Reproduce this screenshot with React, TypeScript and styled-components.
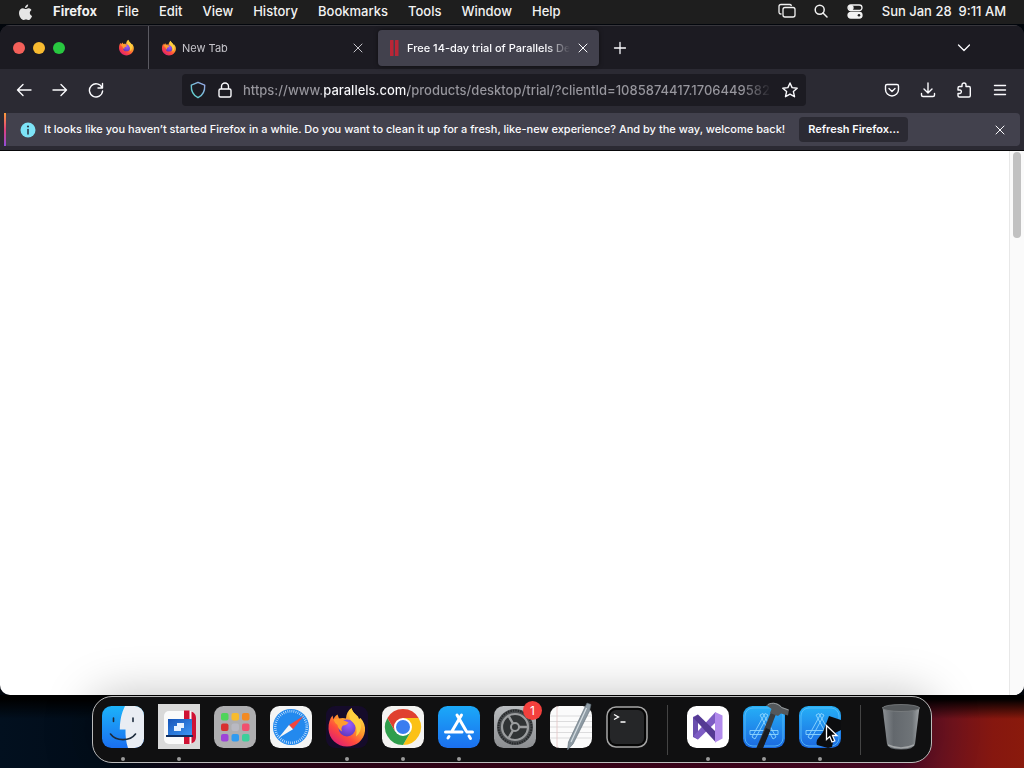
import React from "react";
import styled, { createGlobalStyle, css } from "styled-components";

const GlobalStyle = createGlobalStyle`
  * { box-sizing: border-box; }
  body {
    margin: 0;
    background: #02060c;
    font-family: Inter, "Liberation Sans", sans-serif;
    -webkit-font-smoothing: antialiased;
  }
  button {
    font: inherit;
    color: inherit;
    background: none;
    border: 0;
    padding: 0;
    cursor: default;
  }
`;

const Desktop = styled.div`
  min-height: 100vh;
  display: flex;
  flex-direction: column;
  overflow: hidden;
  background:
    linear-gradient(#000 0, #000 4px, transparent 24px) bottom / 100% 73px no-repeat,
    linear-gradient(90deg, #02101f 0%, #020c18 12%, #14081a 18%, #2d0418 30%, #3a0318 50%, #45041f 75%, #4d0a28 88%, #6b1220 92%, #86170f 97%, #8a1a0c 100%) bottom / 100% 73px no-repeat,
    #02060c;
`;

/* Menu bar */

const MenuBar = styled.header`
  height: 24px;
  display: flex;
  align-items: center;
  justify-content: space-between;
  padding: 0 18px 2px;
  background: #1e1e1e;
  color: #f2f2f2;
  font-size: 13px;
  line-height: 22px;
  white-space: nowrap;
`;

const MenuList = styled.nav`
  display: flex;
  align-items: center;
  gap: 20px;
`;

const MenuItem = styled.button<{ $app?: boolean }>`
  font-weight: ${(p) => (p.$app ? 700 : 500)};
`;

const StatusArea = styled.div`
  display: flex;
  align-items: center;
  gap: 16px;
  font-weight: 500;
`;

const Clock = styled.time`
  padding-left: 2px;
`;

const IconButton = styled.button<{ $size?: number }>`
  width: ${(p) => p.$size ?? 18}px;
  height: ${(p) => p.$size ?? 18}px;
  flex: none;
  display: grid;
  place-items: center;
`;

/* Browser window */

const BrowserWindow = styled.main`
  flex: 1;
  display: flex;
  flex-direction: column;
  margin-top: 1px;
  border-radius: 10px;
  overflow: hidden;
  background: #2b2a33;
  color: #fbfbfe;
`;

const TabStrip = styled.div`
  height: 44px;
  display: flex;
  align-items: center;
  background: #1c1b22;
  border-top: 1px solid #37363c;
  font-size: 11px;
`;

const TrafficLights = styled.div`
  display: flex;
  gap: 8px;
  padding-left: 13px;
  width: 104px;
`;

const Light = styled.button<{ $color: string }>`
  width: 12px;
  height: 12px;
  border-radius: 50%;
  background: ${(p) => p.$color};
`;

const PinnedTab = styled.button`
  width: 45px;
  height: 100%;
  display: grid;
  place-items: center;
  border-right: 1px solid #5b5a62;
`;

const TabList = styled.div`
  display: flex;
  gap: 4px;
  padding: 0 11px 0 4px;
`;

const Tab = styled.div<{ $active?: boolean }>`
  width: 221px;
  height: 36px;
  display: flex;
  align-items: center;
  gap: 5px;
  padding: 0 8px;
  border-radius: 4px;
  color: #c6c5cb;
  ${(p) =>
    p.$active &&
    css`
      color: #fbfbfe;
      background: #42414d;
      box-shadow: 0 0 4px rgba(0, 0, 0, 0.5);
    `}
`;

const TabLabel = styled.button<{ $active?: boolean }>`
  flex: 1;
  min-width: 0;
  overflow: hidden;
  white-space: nowrap;
  text-align: left;
  line-height: 16px;
  font-weight: ${(p) => (p.$active ? 500 : 400)};
  mask-image: linear-gradient(90deg, #000 calc(100% - 24px), transparent);
`;

const StripEnd = styled.div`
  margin-left: auto;
  padding-right: 51px;
`;

const NavBar = styled.div`
  height: 41px;
  display: flex;
  align-items: center;
  padding: 0 15px;
`;

const NavGroup = styled.div`
  display: flex;
  gap: 18px;
`;

const AddressBar = styled.div`
  flex: 1;
  max-width: 624px;
  height: 32px;
  display: flex;
  align-items: center;
  gap: 9px;
  margin-left: 77px;
  margin-right: auto;
  padding: 0 7px;
  border-radius: 4px;
  background: #1c1b22;
`;

const AddressInput = styled.input`
  flex: 1;
  min-width: 0;
  padding: 0;
  border: 0;
  outline: 0;
  font: 500 13px/20px Inter, "Liberation Sans", sans-serif;
  color: transparent;
  background: linear-gradient(90deg, #98979e 80px, #fbfbfe 80px, #fbfbfe 165px, #98979e 165px, #98979e calc(100% - 30px), transparent);
  background-clip: text;
  -webkit-background-clip: text;
`;

const Notice = styled.div`
  display: flex;
  align-items: center;
  height: 33px;
  margin: 3px 4px 4px;
  padding-right: 11px;
  border-radius: 4px;
  border-left: 2px solid;
  border-image: linear-gradient(#ffa436, #e0407b 50%, #8a4de0) 1;
  background: #42414d;
  font-size: 11px;
  font-weight: 500;
  white-space: nowrap;
`;

const NoticeText = styled.p`
  margin: 0 14px 0 8px;
  padding-bottom: 2px;
`;

const NoticeIcon = styled.span`
  display: grid;
  margin-left: 14px;
`;

const RefreshButton = styled.button`
  height: 25px;
  padding: 0 9px 2px;
  border-radius: 4px;
  background: #2b2a33;
  font-weight: 600;
`;

const Spacer = styled.div`
  flex: 1;
`;

const Page = styled.section`
  flex: 1;
  display: flex;
  justify-content: flex-end;
  border-top: 1px solid #08080a;
  background: #fff;
`;

const ScrollTrack = styled.div`
  width: 15px;
  padding: 1px 3px;
  background: #fafafa;
  border-left: 1px solid #e8e8e8;
`;

const ScrollThumb = styled.div`
  width: 8px;
  height: 86px;
  border-radius: 4px;
  background: #c1c1c1;
`;

/* Dock */

const DockArea = styled.footer`
  display: flex;
  justify-content: center;
  padding: 1px 0 5px;
`;

const Dock = styled.div`
  position: relative;
  height: 67px;
  display: flex;
  padding: 0 2px;
  border: 1px solid #bcbcbc;
  border-radius: 20px;
  background: #101011;
  box-shadow: 0 0 48px rgba(0, 0, 0, 0.26);
`;

const DockItem = styled.button<{ $running?: boolean }>`
  position: relative;
  width: 56px;
  display: flex;
  flex-direction: column;
  align-items: center;
  padding-top: 6px;

  &::after {
    content: "";
    width: 4px;
    height: 4px;
    margin-top: 6px;
    border-radius: 50%;
    background: ${(p) => (p.$running ? "#9a9a9a" : "transparent")};
  }
`;

const DockDivider = styled.div`
  width: 1px;
  height: 50px;
  margin: 8px 12px 0;
  background: #444;
`;

const Badge = styled.span`
  position: absolute;
  top: 4px;
  right: 1px;
  width: 19px;
  height: 19px;
  border-radius: 50%;
  background: #f3403d;
  color: #fff;
  font-size: 12px;
  line-height: 19px;
  text-align: center;
`;

const Pointer = styled.svg`
  position: absolute;
  left: 33px;
  top: 27px;
`;

/* Drawings */

const stroke = {
  fill: "none",
  stroke: "currentColor",
  strokeWidth: 1.4,
  strokeLinecap: "round" as const,
  strokeLinejoin: "round" as const,
};

const Line = ({ d, size = 16, width = 1.4 }: { d: string; size?: number; width?: number }) => (
  <svg width={size} height={size} viewBox="0 0 16 16" {...stroke} strokeWidth={width}>
    <path d={d} />
  </svg>
);

const AppleLogo = () => (
  <svg width="15" height="17" viewBox="0 0 15 17" fill="#e6e6e6">
    <path d="M10.2 0.4c.1 1.9-1.5 3.6-3.2 3.5C6.8 2.2 8.5.5 10.2.4ZM10.3 4.3c.7 0 2.2.3 3.2 1.7-2.5 1.5-2.100 4.900.6 5.900-.5 1.500-2 4.100-3.500 4.100-1 0-1.400-.6-2.600-.6s-1.700.6-2.600.6C3.600 16 1 12.700 1 9.100c0-3.200 2-4.800 3.900-4.800 1.200 0 2.200.8 2.900.8s1.500-.8 2.500-.8Z" />
  </svg>
);

const FirefoxMark = ({ size, id }: { size: number; id: string }) => (
  <svg width={size} height={size} viewBox="0 0 42 42">
    <defs>
      <linearGradient id={id + "a"} x1="0.85" y1="0.1" x2="0.25" y2="0.95">
        <stop offset="0" stopColor="#ffe14a" />
        <stop offset="0.4" stopColor="#ff9a2b" />
        <stop offset="0.7" stopColor="#ff4a3d" />
        <stop offset="1" stopColor="#e0226f" />
      </linearGradient>
      <radialGradient id={id + "b"} cx="0.6" cy="0.3" r="0.8">
        <stop offset="0" stopColor="#9a5cff" />
        <stop offset="1" stopColor="#5a35b5" />
      </radialGradient>
    </defs>
    <path
      fill={`url(#${id}a)`}
      d="M2.5 23C2.3 17 4 12.5 6.5 9.5L7.5 13.5C8 11.5 9.5 9.8 11.5 8.5L13 12.5C15.5 11.8 18 11.8 20 12.5C20.3 8 22 4.5 25.5 2C26.5 6 29 7.8 32 10.5L33 13L34.5 12C38 16 39.5 20 39 25C38 34 30.5 40.5 21 40.5C11 40.5 3 33 2.5 23Z"
    />
    <circle cx="21" cy="22" r="8.5" fill={`url(#${id}b)`} />
    <path fill="#ff9d2e" d="M7.5 13.5Q13 11 18 14.5L22.5 16.5Q20.5 19.5 17 19.5Q14.5 22 16 25.5Q12 23 11.5 19Q8.5 17 7.5 13.5Z" />
    <path fill="#ffcf3f" d="M25.5 2C26 7 34 11 35 19Q35.5 26 30 30.5Q32 22 27.5 17Q20 12 25.5 2Z" />
  </svg>
);

const Shield = () => (
  <svg width="18" height="18" viewBox="0 0 18 18" fill="none" strokeWidth="1.4" strokeLinejoin="round">
    <defs>
      <linearGradient id="shield" x1="0" y1="1" x2="1" y2="0">
        <stop offset="0" stopColor="#54d3c5" />
        <stop offset="1" stopColor="#9aa5e8" />
      </linearGradient>
    </defs>
    <path stroke="url(#shield)" d="M9 1.3L15.7 4.2C16 9.8 13.5 14.5 9 16.7C4.5 14.5 2 9.8 2.3 4.2Z" />
  </svg>
);

const Parallels = () => (
  <svg width="16" height="16" viewBox="0 0 16 16" fill="#b92636">
    <rect x="4" y="0" width="3.5" height="16" rx="0.5" />
    <rect x="9" y="0" width="3.5" height="16" rx="0.5" />
  </svg>
);

const CLOSE = "M4 4L12 12M12 4L4 12";

const Art = ({ children, overflow }: { children: React.ReactNode; overflow?: boolean }) => (
  <svg width="50" height="48" viewBox="-4 -3 50 48" overflow={overflow ? "visible" : undefined}>
    {children}
  </svg>
);

const Finder = () => (
  <Art>
    <defs>
      <linearGradient id="fin" x1="0" y1="0" x2="0" y2="1">
        <stop offset="0" stopColor="#1cb3fa" />
        <stop offset="1" stopColor="#1a6ff0" />
      </linearGradient>
      <clipPath id="finc"><rect width="42" height="42" rx="9.5" /></clipPath>
    </defs>
    <g clipPath="url(#finc)">
      <rect width="42" height="42" fill="url(#fin)" />
      <path fill="#e9edf3" d="M23 0C19.5 7 18 14 17.8 23.5H23.5C23.3 30 24 36 26 42H42V0Z" />
    </g>
    <g fill="none" stroke="#1d2b3c" strokeWidth="1.6" strokeLinecap="round">
      <path d="M11.5 12V15.5M31 12V15.5" />
      <path d="M8.5 28C14 35.5 28 35.5 33.5 28" />
    </g>
  </Art>
);

const ParallelsApp = () => (
  <Art>
    <defs>
      <linearGradient id="lap" x1="0" y1="0" x2="1" y2="1">
        <stop offset="0" stopColor="#1554b8" />
        <stop offset="1" stopColor="#3d97f5" />
      </linearGradient>
    </defs>
    <rect x="0" y="-2" width="42" height="45" fill="#d9d9d9" />
    <rect x="6" y="5" width="31" height="33" rx="5" fill="#fafafa" />
    <path fill="#cf1234" d="M26 4.500H31.500V38H26ZM33.500 5.500Q38 7 38 12V31Q38 36 33.500 37.500Z" />
    <path fill="url(#lap)" d="M10 13H34V29H10Z" />
    <path fill="#0f2f63" d="M8 29H35V31H8Z" />
    <path fill="#e4f1ff" d="M19 17H26V22H23V25H16V20H19Z" />
  </Art>
);

const Launchpad = () => (
  <Art>
    <rect width="42" height="42" rx="9.5" fill="#aeaeb0" />
    {["#4fd45a", "#f7bb2d", "#f28a22", "#d8302f", "#b9b9c2", "#f0506e", "#9d44d8", "#2f9bf0", "#3ccf9b"].map((c, i) => (
      <rect key={c} x={7 + (i % 3) * 10.5} y={7 + Math.floor(i / 3) * 10.5} width="7.5" height="7.5" rx="2" fill={c} />
    ))}
  </Art>
);

const Safari = () => (
  <Art>
    <rect width="42" height="42" rx="9.5" fill="#f4f4f4" />
    <circle cx="21" cy="21" r="18" fill="#2389ee" />
    <circle cx="21" cy="21" r="15.8" fill="none" stroke="#d5eaff" strokeWidth="2.6" strokeDasharray="0.7 1.37" />
    <path fill="#f2453d" d="M33.5 10L23 23.2L19 19Z" />
    <path fill="#f6f6f6" d="M8.5 32L19 19L23 23.2Z" />
  </Art>
);

const Chrome = () => (
  <Art>
    <rect width="42" height="42" rx="9.5" fill="#f4f3f1" />
    <path fill="#fbc116" d="M21 12H36.600A18 18 0 0 1 21 39L28.800 25.500Z" />
    <path fill="#2f9e4c" d="M28.800 25.500L21 39A18 18 0 0 1 5.400 12L13.200 25.500Z" />
    <path fill="#e0402f" d="M13.200 25.500L5.400 12A18 18 0 0 1 36.600 12H21Z" />
    <circle cx="21" cy="21" r="9" fill="#fff" />
    <circle cx="21" cy="21" r="7" fill="#3a7df0" />
  </Art>
);

const AppStore = () => (
  <Art>
    <defs>
      <linearGradient id="store" x1="0" y1="0" x2="0" y2="1">
        <stop offset="0" stopColor="#1ba9f8" />
        <stop offset="1" stopColor="#1b6fee" />
      </linearGradient>
    </defs>
    <rect width="42" height="42" rx="9.5" fill="url(#store)" />
    <g stroke="#fff" strokeWidth="3" strokeLinecap="round">
      <path d="M19 9L28.5 25.5M31 30L32.5 32.5M23.5 9L13.5 26M7.5 26H24M29 26H34.5M11 30.5L10 32" />
    </g>
  </Art>
);

const Settings = () => (
  <Art>
    <defs>
      <linearGradient id="set" x1="0" y1="0" x2="0" y2="1">
        <stop offset="0" stopColor="#b9bcbf" />
        <stop offset="1" stopColor="#8c8e91" />
      </linearGradient>
    </defs>
    <rect width="42" height="42" rx="9.5" fill="url(#set)" />
    <circle cx="21" cy="21" r="18" fill="#4a4d50" />
    <circle cx="21" cy="21" r="16.5" fill="none" stroke="#26282a" strokeWidth="2" strokeDasharray="1.5 1" />
    <circle cx="21" cy="21" r="13" fill="#303335" stroke="#9b9d9f" strokeWidth="2.2" />
    <path d="M21 21H33.500M21 21L14.700 10.200M21 21L14.700 31.800" stroke="#9b9d9f" strokeWidth="2.4" />
    <circle cx="21" cy="21" r="4" fill="#303335" stroke="#9b9d9f" strokeWidth="2" />
  </Art>
);

const TextEdit = () => (
  <Art overflow>
    <rect width="42" height="42" rx="9.5" fill="#fbfbfb" />
    <path stroke="#d4d4d6" strokeWidth="0.8" d="M0 10H42M0 15.500H42M0 21H42M0 26.500H42M0 32H42" />
    <path stroke="#e3c4c4" strokeWidth="0.8" d="M7 0V42" />
    <path fill="#8d9aa3" stroke="#5d6a73" strokeWidth="0.6" d="M37 -3L41 -1.500L39.500 5L23 38L17.500 44L18.500 36L35 1Z" />
    <path stroke="#d5dde2" strokeWidth="1.2" d="M36.500 2L21 36" />
  </Art>
);

const Terminal = () => (
  <Art>
    <rect x="1" y="1" width="40" height="40" rx="9" fill="#050505" stroke="#a5a5a5" strokeWidth="1.5" />
    <rect x="4" y="4" width="34" height="34" rx="6" fill="#252628" />
    <path d="M8 8.500L12.500 11L8 13.500M14.500 16H19.500" fill="none" stroke="#fff" strokeWidth="1.3" />
  </Art>
);

const VisualStudio = () => (
  <Art>
    <rect width="42" height="42" rx="9.5" fill="#fff" />
    <path fill="#6a4fae" d="M6 11L11 8.500V33.500L6 31Z" />
    <path fill="#7d5cc4" d="M11 33.500L6.500 30L28.500 6L29 16Z" />
    <path fill="#553a94" d="M6.500 12L11 8.500L29 26V36.500Z" />
    <path fill="#b18aec" d="M28 6L35.500 9.500V32.500L28 36.500Z" />
  </Art>
);

const XcodeBase = () => (
  <>
    <defs>
      <linearGradient id="xc" x1="0" y1="0" x2="0" y2="1">
        <stop offset="0" stopColor="#26b0f7" />
        <stop offset="1" stopColor="#1b68e0" />
      </linearGradient>
    </defs>
    <rect width="42" height="42" rx="9.5" fill="url(#xc)" />
    <rect x="2" y="2" width="38" height="38" rx="8" fill="none" stroke="#5cc2fb" strokeWidth="0.8" />
    <g fill="none" stroke="#8fd6ff" strokeWidth="0.9">
      <path d="M17 9L20 7.500L33 31L30 33ZM25 9L22 7.500L9 31L12 33ZM7 24.500H35V28.500H7Z" />
    </g>
  </>
);

const Xcode = () => (
  <Art overflow>
    <XcodeBase />
    <path fill="#3a3d40" d="M28 6L33 8L20 42H13.500Z" />
    <path fill="#191b1d" d="M23 22L27.500 24L20 42H13.500Z" />
    <path fill="#54585b" d="M23 -0.500C28 -4.500 35 -4 39 1L46 3.500L45 9.500L38 7.500L35 10L27 7L28.500 3Q26 0.500 23 -0.500Z" />
    <path stroke="#9da1a4" strokeWidth="0.9" fill="none" d="M25 -1.500C30 -4 35 -2.500 38.500 1.500L45.500 4" />
  </Art>
);

const Simulator = () => (
  <Art>
    <XcodeBase />
    <path fill="#0c0d0f" d="M30 10L42 14V24L36 27L33 41L29 42L18 39Q17 37 18 34L24 26Z" />
  </Art>
);

const Trash = () => (
  <Art>
    <defs>
      <linearGradient id="bin" x1="0" y1="0" x2="1" y2="0">
        <stop offset="0" stopColor="#8b8f93" />
        <stop offset="0.3" stopColor="#63686d" />
        <stop offset="0.8" stopColor="#6f7478" />
        <stop offset="1" stopColor="#a1a5a8" />
      </linearGradient>
    </defs>
    <path fill="url(#bin)" d="M2.500 1L7 38Q8 43.500 21 43.500T35 38L39.500 1Z" />
    <ellipse cx="21" cy="2" rx="18.5" ry="3.500" fill="#55595c" stroke="#7c8083" strokeWidth="0.8" />
    <path d="M8 39Q21 45 34 39" fill="none" stroke="#a3a6a8" strokeWidth="1.5" />
  </Art>
);

const FirefoxApp = () => (
  <Art>
    <rect width="42" height="42" rx="9" fill="#150b2a" />
    <FirefoxMark size={42} id="ffd" />
  </Art>
);

const menus = ["File", "Edit", "View", "History", "Bookmarks", "Tools", "Window", "Help"];

const pinnedApps = [
  { name: "Finder", icon: <Finder />, running: true },
  { name: "Parallels", icon: <ParallelsApp />, running: true },
  { name: "Launchpad", icon: <Launchpad /> },
  { name: "Safari", icon: <Safari /> },
  { name: "Firefox", icon: <FirefoxApp />, running: true },
  { name: "Chrome", icon: <Chrome />, running: true },
  { name: "App Store", icon: <AppStore />, running: true },
  { name: "System Settings", icon: <Settings />, badge: "1" },
  { name: "TextEdit", icon: <TextEdit /> },
  { name: "Terminal", icon: <Terminal /> },
];

export default function App() {
  return (
    <Desktop>
      <GlobalStyle />
      <MenuBar>
        <MenuList aria-label="Menu bar">
          <IconButton aria-label="Apple menu" $size={15}><AppleLogo /></IconButton>
          <MenuItem $app>Firefox</MenuItem>
          {menus.map((m) => <MenuItem key={m}>{m}</MenuItem>)}
        </MenuList>
        <StatusArea>
          <IconButton aria-label="Stage Manager">
            <svg width="18" height="16" viewBox="0 0 18 16" {...stroke} strokeWidth={1.3}>
              <rect x="5" y="4.5" width="12" height="9.5" rx="2" />
              <path d="M3 11Q1 11 1 9V3.500Q1 1.500 3 1.500H11.500Q13 1.500 13.300 2.500" />
            </svg>
          </IconButton>
          <IconButton aria-label="Search">
            <svg width="14" height="14" viewBox="0 0 14 14" {...stroke} strokeWidth={1.5}>
              <circle cx="5.7" cy="5.7" r="4.5" /><path d="M9 9L13 13" />
            </svg>
          </IconButton>
          <IconButton aria-label="Control Center">
            <svg width="16" height="15" viewBox="0 0 16 15" {...stroke} strokeWidth={1.3}>
              <rect x="1" y="1" width="14" height="5.5" rx="2.75" />
              <circle cx="4" cy="3.75" r="2" fill="currentColor" />
              <rect x="1" y="8.5" width="14" height="5.5" rx="2.75" fill="currentColor" />
              <circle cx="12" cy="11.25" r="1.3" fill="#1e1e1e" stroke="none" />
            </svg>
          </IconButton>
          <Clock>Sun Jan 28&nbsp; 9:11 AM</Clock>
        </StatusArea>
      </MenuBar>

      <BrowserWindow>
        <TabStrip>
          <TrafficLights>
            <Light aria-label="Close window" $color="#f4605a" />
            <Light aria-label="Minimize window" $color="#f8bb30" />
            <Light aria-label="Zoom window" $color="#28c840" />
          </TrafficLights>
          <PinnedTab aria-label="Firefox View"><FirefoxMark size={17} id="ffv" /></PinnedTab>
          <TabList>
            <Tab>
              <FirefoxMark size={16} id="fft" />
              <TabLabel>New Tab</TabLabel>
              <IconButton aria-label="Close New Tab" $size={16}><Line d={CLOSE} width={1} /></IconButton>
            </Tab>
            <Tab $active>
              <Parallels />
              <TabLabel $active>Free 14-day trial of Parallels Desktop</TabLabel>
              <IconButton aria-label="Close tab" $size={16}><Line d={CLOSE} width={1} /></IconButton>
            </Tab>
          </TabList>
          <IconButton aria-label="New tab" $size={20}><Line d="M8 2.500V13.500M2.500 8H13.500" width={1.3} /></IconButton>
          <StripEnd>
            <IconButton aria-label="List all tabs"><Line d="M2.500 5L8 10.500L13.500 5" width={1.3} /></IconButton>
          </StripEnd>
        </TabStrip>

        <NavBar>
          <NavGroup>
            <IconButton aria-label="Back"><Line d="M15 8H1.500M7 2.500L1.500 8L7 13.500" /></IconButton>
            <IconButton aria-label="Forward"><Line d="M1 8H14.500M9 2.500L14.500 8L9 13.500" /></IconButton>
            <IconButton aria-label="Reload"><Line d="M14.500 1.500V6H10M14 5.500A6.600 6.600 0 1 0 14.600 9" /></IconButton>
          </NavGroup>
          <AddressBar>
            <IconButton aria-label="Tracking protection"><Shield /></IconButton>
            <IconButton aria-label="Site security"><Line d="M3.500 7H12.500Q14 7 14 8.500V13.500Q14 15 12.500 15H3.500Q2 15 2 13.500V8.500Q2 7 3.500 7ZM4.500 7V4.500A3.500 3.500 0 0 1 11.500 4.500V7" /></IconButton>
            <AddressInput
              aria-label="Address"
              defaultValue="https://www.parallels.com/products/desktop/trial/?clientId=1085874417.1706449582"
            />
            <IconButton aria-label="Bookmark this page"><Line d="M8 1L10.100 5.600L15.200 6.200L11.400 9.600L12.500 14.700L8 12.100L3.500 14.700L4.600 9.600L0.800 6.200L5.900 5.600Z" /></IconButton>
          </AddressBar>
          <NavGroup>
            <IconButton aria-label="Save to Pocket"><Line d="M3 2.500H13Q14.500 2.500 14.500 4V7.500A6.500 6.500 0 0 1 1.500 7.500V4Q1.500 2.500 3 2.500ZM5 6.500L8 9.500L11 6.500" /></IconButton>
            <IconButton aria-label="Downloads"><Line d="M8 1V10.500M4 7L8 11L12 7M1.500 11.500V13Q1.500 14.500 3 14.500H13Q14.500 14.500 14.500 13V11.500" /></IconButton>
            <IconButton aria-label="Extensions"><Line d="M6 4.500V3A2 2 0 0 1 10 3V4.500H13Q14.300 4.500 14.300 6V13.500Q14.300 15 13 15H3.500Q2 15 2 13.500V11.500H4A1.800 1.800 0 0 0 4 8H2V6Q2 4.500 3.500 4.500Z" /></IconButton>
            <IconButton aria-label="Application menu"><Line d="M2.500 3.500H13.500M2.500 8H13.500M2.500 12.500H13.500" /></IconButton>
          </NavGroup>
        </NavBar>

        <Notice role="status">
          <NoticeIcon>
            <svg width="16" height="16" viewBox="0 0 16 16">
              <circle cx="8" cy="8" r="7.5" fill="#7de3f7" />
              <circle cx="8" cy="4.5" r="1.1" fill="#2b3a4a" />
              <path d="M8 7.500V12" stroke="#2b3a4a" strokeWidth="1.6" strokeLinecap="round" />
            </svg>
          </NoticeIcon>
          <NoticeText>
            It looks like you haven’t started Firefox in a while. Do you want to clean it up for a fresh, like-new experience? And by the way, welcome back!
          </NoticeText>
          <RefreshButton>Refresh Firefox…</RefreshButton>
          <Spacer />
          <IconButton aria-label="Dismiss"><Line d={CLOSE} width={1} /></IconButton>
        </Notice>

        <Page aria-label="Page content">
          <ScrollTrack><ScrollThumb /></ScrollTrack>
        </Page>
      </BrowserWindow>

      <DockArea>
        <Dock>
          {pinnedApps.map((a) => (
            <DockItem key={a.name} aria-label={a.name} $running={a.running}>
              {a.icon}
              {a.badge && <Badge>{a.badge}</Badge>}
            </DockItem>
          ))}
          <DockDivider />
          <DockItem aria-label="Visual Studio" $running><VisualStudio /></DockItem>
          <DockItem aria-label="Xcode" $running><Xcode /></DockItem>
          <DockItem aria-label="Simulator" $running>
            <Simulator />
            <Pointer width="14" height="20" viewBox="0 0 14 20">
              <path d="M1.500 1.500V15.500L4.800 12.500L7 18L9.800 16.800L7.500 11.500H12Z" fill="#000" stroke="#fff" strokeWidth="1.3" />
            </Pointer>
          </DockItem>
          <DockDivider />
          <DockItem aria-label="Trash"><Trash /></DockItem>
        </Dock>
      </DockArea>
    </Desktop>
  );
}
